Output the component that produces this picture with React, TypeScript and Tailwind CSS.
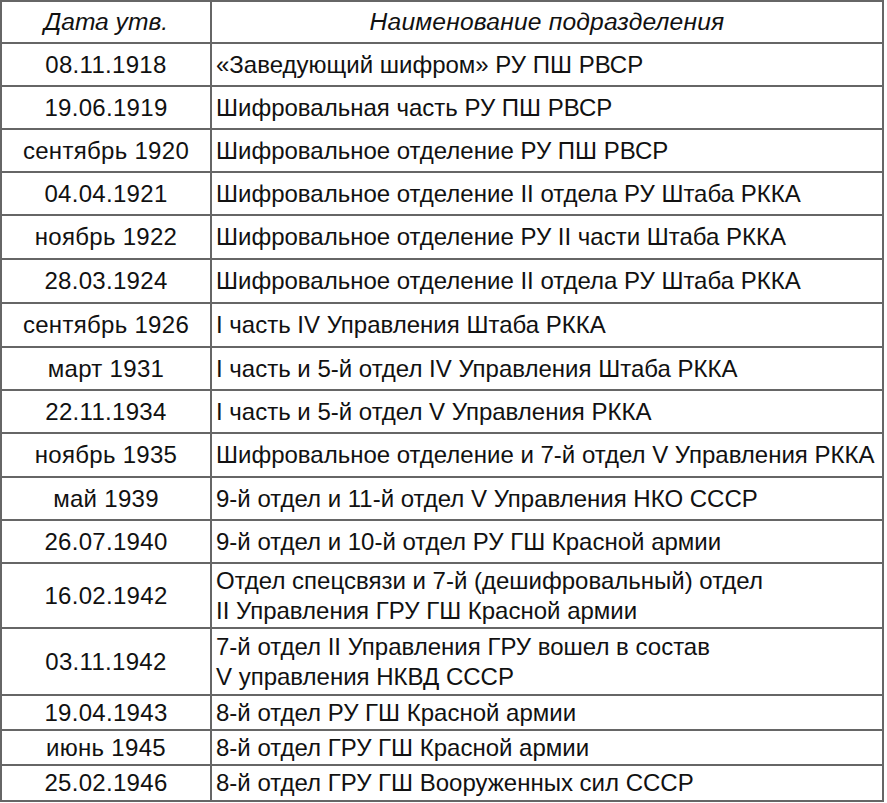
const rows: { date: string; name: string[]; h: string }[] = [
  { date: '08.11.1918', name: ['«Заведующий шифром» РУ ПШ РВСР'], h: 'h-[43px]' },
  { date: '19.06.1919', name: ['Шифровальная часть РУ ПШ РВСР'], h: 'h-[43px]' },
  { date: 'сентябрь 1920', name: ['Шифровальное отделение РУ ПШ РВСР'], h: 'h-[43px]' },
  { date: '04.04.1921', name: ['Шифровальное отделение II отдела РУ Штаба РККА'], h: 'h-[43px]' },
  { date: 'ноябрь 1922', name: ['Шифровальное отделение РУ II части Штаба РККА'], h: 'h-[44px]' },
  { date: '28.03.1924', name: ['Шифровальное отделение II отдела РУ Штаба РККА'], h: 'h-[44px]' },
  { date: 'сентябрь 1926', name: ['I часть IV Управления Штаба РККА'], h: 'h-[44px]' },
  { date: 'март 1931', name: ['I часть и 5-й отдел IV Управления Штаба РККА'], h: 'h-[43px]' },
  { date: '22.11.1934', name: ['I часть и 5-й отдел V Управления РККА'], h: 'h-[43px]' },
  { date: 'ноябрь 1935', name: ['Шифровальное отделение и 7-й отдел V Управления РККА'], h: 'h-[44px]' },
  { date: 'май 1939', name: ['9-й отдел и 11-й отдел V Управления НКО СССР'], h: 'h-[43px]' },
  { date: '26.07.1940', name: ['9-й отдел и 10-й отдел РУ ГШ Красной армии'], h: 'h-[43px]' },
  {
    date: '16.02.1942',
    name: ['Отдел спецсвязи и 7-й (дешифровальный) отдел', 'II Управления ГРУ ГШ Красной армии'],
    h: 'h-[65px]',
  },
  {
    date: '03.11.1942',
    name: ['7-й отдел II Управления ГРУ вошел в состав', 'V управления НКВД СССР'],
    h: 'h-[67px]',
  },
  { date: '19.04.1943', name: ['8-й отдел РУ ГШ Красной армии'], h: 'h-[35px]' },
  { date: 'июнь 1945', name: ['8-й отдел ГРУ ГШ Красной армии'], h: 'h-[35px]' },
  { date: '25.02.1946', name: ['8-й отдел ГРУ ГШ Вооруженных сил СССР'], h: 'h-[34px]' },
]

export default function App() {
  return (
    <div className="w-[887px] h-[803px] bg-white font-['Liberation_Sans',Arial,sans-serif] text-[24px] text-[#111]">
      <div className="w-[884px] border-2 border-[#666]">
        {/* Header */}
        <div className="flex h-[42px] border-b-2 border-[#666] italic text-[24.6px]">
          <div className="w-[210px] shrink-0 border-r-2 border-[#666] flex items-center justify-center">
            Дата утв.
          </div>
          <div className="flex-1 flex items-center justify-center tracking-[0.2px]">
            Наименование подразделения
          </div>
        </div>

        {rows.map((r, i) => (
          <div
            key={r.date}
            className={`flex ${r.h} ${i < rows.length - 1 ? 'border-b-2 border-[#666]' : ''}`}
          >
            <div className="w-[210px] shrink-0 border-r-2 border-[#666] flex items-center justify-center tracking-[0.3px]">
              {r.date}
            </div>
            <div className="flex-1 flex flex-col justify-center pl-[4px] leading-[30px]">
              {r.name.map((line) => (
                <div key={line}>{line}</div>
              ))}
            </div>
          </div>
        ))}
      </div>
    </div>
  )
}
